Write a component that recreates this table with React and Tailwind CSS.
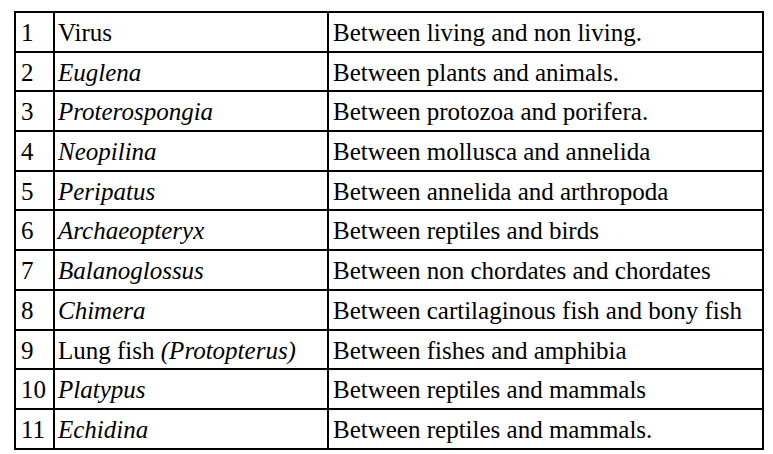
const ROWS = [
  { n: "1", name: "Virus", link: "Between living and non living." },
  { n: "2", name: <i>Euglena</i>, link: "Between plants and animals." },
  { n: "3", name: <i>Proterospongia</i>, link: "Between protozoa and porifera." },
  { n: "4", name: <i>Neopilina</i>, link: "Between mollusca and annelida" },
  { n: "5", name: <i>Peripatus</i>, link: "Between annelida and arthropoda" },
  { n: "6", name: <i>Archaeopteryx</i>, link: "Between reptiles and birds" },
  { n: "7", name: <i>Balanoglossus</i>, link: "Between non chordates and chordates" },
  { n: "8", name: <i>Chimera</i>, link: "Between cartilaginous fish and bony fish" },
  {
    n: "9",
    name: (
      <>
        Lung fish <i>(Protopterus)</i>
      </>
    ),
    link: "Between fishes and amphibia",
  },
  { n: "10", name: <i>Platypus</i>, link: "Between reptiles and mammals" },
  { n: "11", name: <i>Echidina</i>, link: "Between reptiles and mammals." },
];

const cell = "h-[39.7px] border-r-2 border-b-2 border-black pt-[6px] leading-[28px] whitespace-nowrap overflow-hidden";

export default function App() {
  return (
    <div className="min-h-[454px] w-[773px] bg-white pt-[11px] pl-[14px] font-['Liberation_Serif',serif] text-[25px] text-black">
      <div className="grid w-[750px] grid-cols-[39px_274px_435px] border-t-2 border-l-2 border-black">
        {ROWS.map((row) => (
          <div key={row.n} className="contents">
            <div className={`${cell} pl-[5px]`}>{row.n}</div>
            <div className={`${cell} pl-[3px]`}>{row.name}</div>
            <div className={`${cell} pl-[4px]`}>{row.link}</div>
          </div>
        ))}
      </div>
    </div>
  );
}
